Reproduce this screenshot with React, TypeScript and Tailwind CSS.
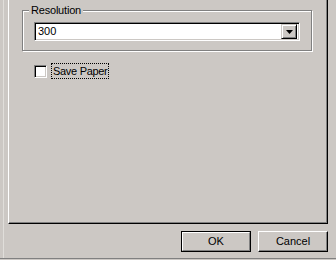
import React from "react";

const font = { fontFamily: '"Liberation Sans", Arial, sans-serif' };

function Button({ label, isDefault }: { label: string; isDefault?: boolean }) {
  if (isDefault) {
    return (
      <div className="w-[70px] h-[21px] border border-black">
        <div className="w-full h-full border-t border-l border-t-white border-l-white border-b border-r border-b-[#808080] border-r-[#808080] flex items-center justify-center text-[11px] text-black">
          {label}
        </div>
      </div>
    );
  }
  return (
    <div className="w-[70px] h-[21px] border-t border-l border-t-white border-l-white border-b border-r border-b-black border-r-black shadow-[inset_-1px_-1px_0_#808080] flex items-center justify-center text-[11px] text-black">
      {label}
    </div>
  );
}

export default function App() {
  return (
    <div className="w-[336px] h-[260px] bg-[#ccc8c4] relative overflow-hidden flex flex-col" style={font}>
      <div className="absolute left-[3px] top-0 w-px h-[258px] bg-[#e0deda]" />
      {/* tab page */}
      <div className="ml-[8px] w-[320px] h-[224px] shrink-0 border-l border-l-white border-r border-r-black border-b border-b-black shadow-[inset_-1px_-1px_0_#808080] pt-[10px] pl-[13px]">
        {/* group box */}
        <div className="relative w-[290px] h-[41px] border border-[#808080] shadow-[1px_1px_0_#fff,inset_1px_1px_0_#fff] pt-[11px] pl-[11px]">
          <div className="absolute left-[6px] top-[-8px] px-[2px] bg-[#ccc8c4] text-[11px] leading-[14px] tracking-[-0.2px] text-black">
            Resolution
          </div>
          {/* select */}
          <div className="w-[266px] h-[19px] border-t border-l border-t-[#808080] border-l-[#808080] border-b border-r border-b-white border-r-white shadow-[inset_1px_1px_0_#000,inset_-1px_-1px_0_#ccc8c4] bg-white flex items-center pl-[2px] pr-[2px]">
            <span className="flex-1 text-[11px] leading-[13px] text-black pl-[1px]">300</span>
            <div className="w-[16px] h-[15px] bg-[#ccc8c4] border-t border-l border-t-[#ccc8c4] border-l-[#ccc8c4] border-b border-r border-b-black border-r-black shadow-[inset_1px_1px_0_#fff,inset_-1px_-1px_0_#808080] flex items-center justify-center">
              <svg width="7" height="4" viewBox="0 0 7 4">
                <path d="M0 0h7L3.5 4z" fill="#000" />
              </svg>
            </div>
          </div>
        </div>
        {/* checkbox row */}
        <div className="mt-[12px] ml-[12px] flex items-center">
          <div className="w-[13px] h-[13px] border-t border-l border-t-[#808080] border-l-[#808080] border-b border-r border-b-white border-r-white shadow-[inset_1px_1px_0_#000,inset_-1px_-1px_0_#ccc8c4] bg-white shrink-0" />
          <div className="ml-[4px] h-[16px] border border-dotted border-black flex items-center pl-[1px] pr-px">
            <span className="text-[11px] leading-[13px] tracking-[-0.3px] text-black whitespace-nowrap">Save Paper</span>
          </div>
        </div>
      </div>
      {/* button row */}
      <div className="h-[34px] flex items-start justify-end pr-[8px] pt-[7px] gap-[7px]">
        <Button label="OK" isDefault />
        <Button label="Cancel" />
      </div>
      <div className="h-px bg-[#808080]" />
    </div>
  );
}
